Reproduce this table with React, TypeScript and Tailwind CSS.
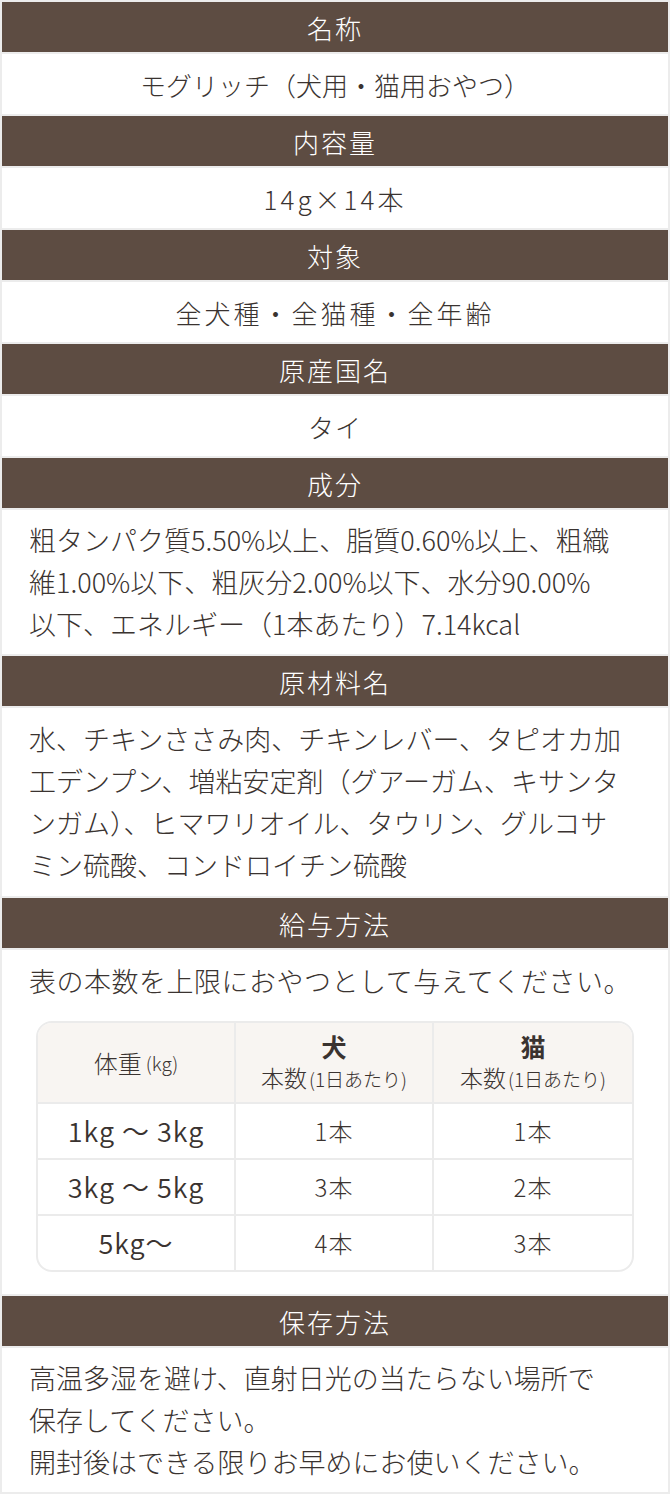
const font = { fontFamily: '"Noto Sans CJK JP", "Noto Sans", sans-serif' };

function Head({ children }: { children: React.ReactNode }) {
  return (
    <div className="h-[50px] bg-[#5d4c42] text-white text-[26px] tracking-[2px] flex items-center justify-center font-light">
      {children}
    </div>
  );
}

function Cell({ children, className = '' }: { children: React.ReactNode; className?: string }) {
  return (
    <div className={`h-[60px] bg-white text-[26px] flex items-center justify-center font-light ${className}`}>
      {children}
    </div>
  );
}

function Body({ children, className = '' }: { children: React.ReactNode; className?: string }) {
  return (
    <div className={`bg-white px-[27px] text-[27px] leading-[42px] font-light ${className}`}>
      {children}
    </div>
  );
}

const rows = [
  { w: '1kg ～ 3kg', dog: '1本', cat: '1本' },
  { w: '3kg ～ 5kg', dog: '3本', cat: '2本' },
  { w: '5kg～', dog: '4本', cat: '3本' },
];

function FeedTable() {
  return (
    <div className="mx-[7px] mt-[19px] border-2 border-[#ebebeb] rounded-[16px] overflow-hidden">
      <div className="grid grid-cols-3 bg-[#f8f5f2] h-[81px] border-b-2 border-[#ebebeb]">
        <div className="flex items-center justify-center text-[24px] font-light border-r-2 border-[#ebebeb]">
          体重<span className="text-[19px] ml-[4px]">(kg)</span>
        </div>
        <div className="flex flex-col items-center justify-center border-r-2 border-[#ebebeb]">
          <div className="text-[25px] font-bold leading-[30px]">犬</div>
          <div className="text-[23px] font-light leading-[32px]">
            本数<span className="text-[19px] ml-[2px]">(1日あたり)</span>
          </div>
        </div>
        <div className="flex flex-col items-center justify-center">
          <div className="text-[25px] font-bold leading-[30px]">猫</div>
          <div className="text-[23px] font-light leading-[32px]">
            本数<span className="text-[19px] ml-[2px]">(1日あたり)</span>
          </div>
        </div>
      </div>
      {rows.map((r, i) => (
        <div
          key={r.w}
          className={`grid grid-cols-3 ${i < rows.length - 1 ? 'h-[56px] border-b-2 border-[#ebebeb]' : 'h-[54px]'}`}
        >
          <div className="flex items-center justify-center text-[27px] font-[350] tracking-[1px] border-r-2 border-[#ebebeb]">
            {r.w}
          </div>
          <div className="flex items-center justify-center text-[24px] font-light tracking-[1px] border-r-2 border-[#ebebeb]">
            {r.dog}
          </div>
          <div className="flex items-center justify-center text-[24px] font-light tracking-[1px]">{r.cat}</div>
        </div>
      ))}
    </div>
  );
}

export default function App() {
  return (
    <div style={font} className="w-[670px] bg-[#ececec] p-[2px] flex flex-col gap-[2px] text-[#3a3330]">
      <Head>名称</Head>
      <Cell>モグリッチ（犬用・猫用おやつ）</Cell>
      <Head>内容量</Head>
      <Cell className="tracking-[3px]">14g×14本</Cell>
      <Head>対象</Head>
      <Cell className="tracking-[3px]">全犬種・全猫種・全年齢</Cell>
      <Head>原産国名</Head>
      <Cell className="tracking-[1px]">タイ</Cell>
      <Head>成分</Head>
      <Body className="py-[9px]">
        粗タンパク質5.50%以上、脂質0.60%以上、粗織
        <br />
        維1.00%以下、粗灰分2.00%以下、水分90.00%
        <br />
        以下、エネルギー（1本あたり）7.14kcal
      </Body>
      <Head>原材料名</Head>
      <Body className="py-[10px]">
        水、チキンささみ肉、チキンレバー、タピオカ加
        <br />
        工デンプン、増粘安定剤（グアーガム、キサンタ
        <br />
        ンガム）、ヒマワリオイル、タウリン、グルコサ
        <br />
        ミン硫酸、コンドロイチン硫酸
      </Body>
      <Head>給与方法</Head>
      <Body className="pt-[10px] pb-[22px]">
        <div className="tracking-[0.5px]">表の本数を上限におやつとして与えてください。</div>
        <FeedTable />
      </Body>
      <Head>保存方法</Head>
      <Body className="py-[9px]">
        高温多湿を避け、直射日光の当たらない場所で
        <br />
        保存してください。
        <br />
        開封後はできる限りお早めにお使いください。
      </Body>
    </div>
  );
}
